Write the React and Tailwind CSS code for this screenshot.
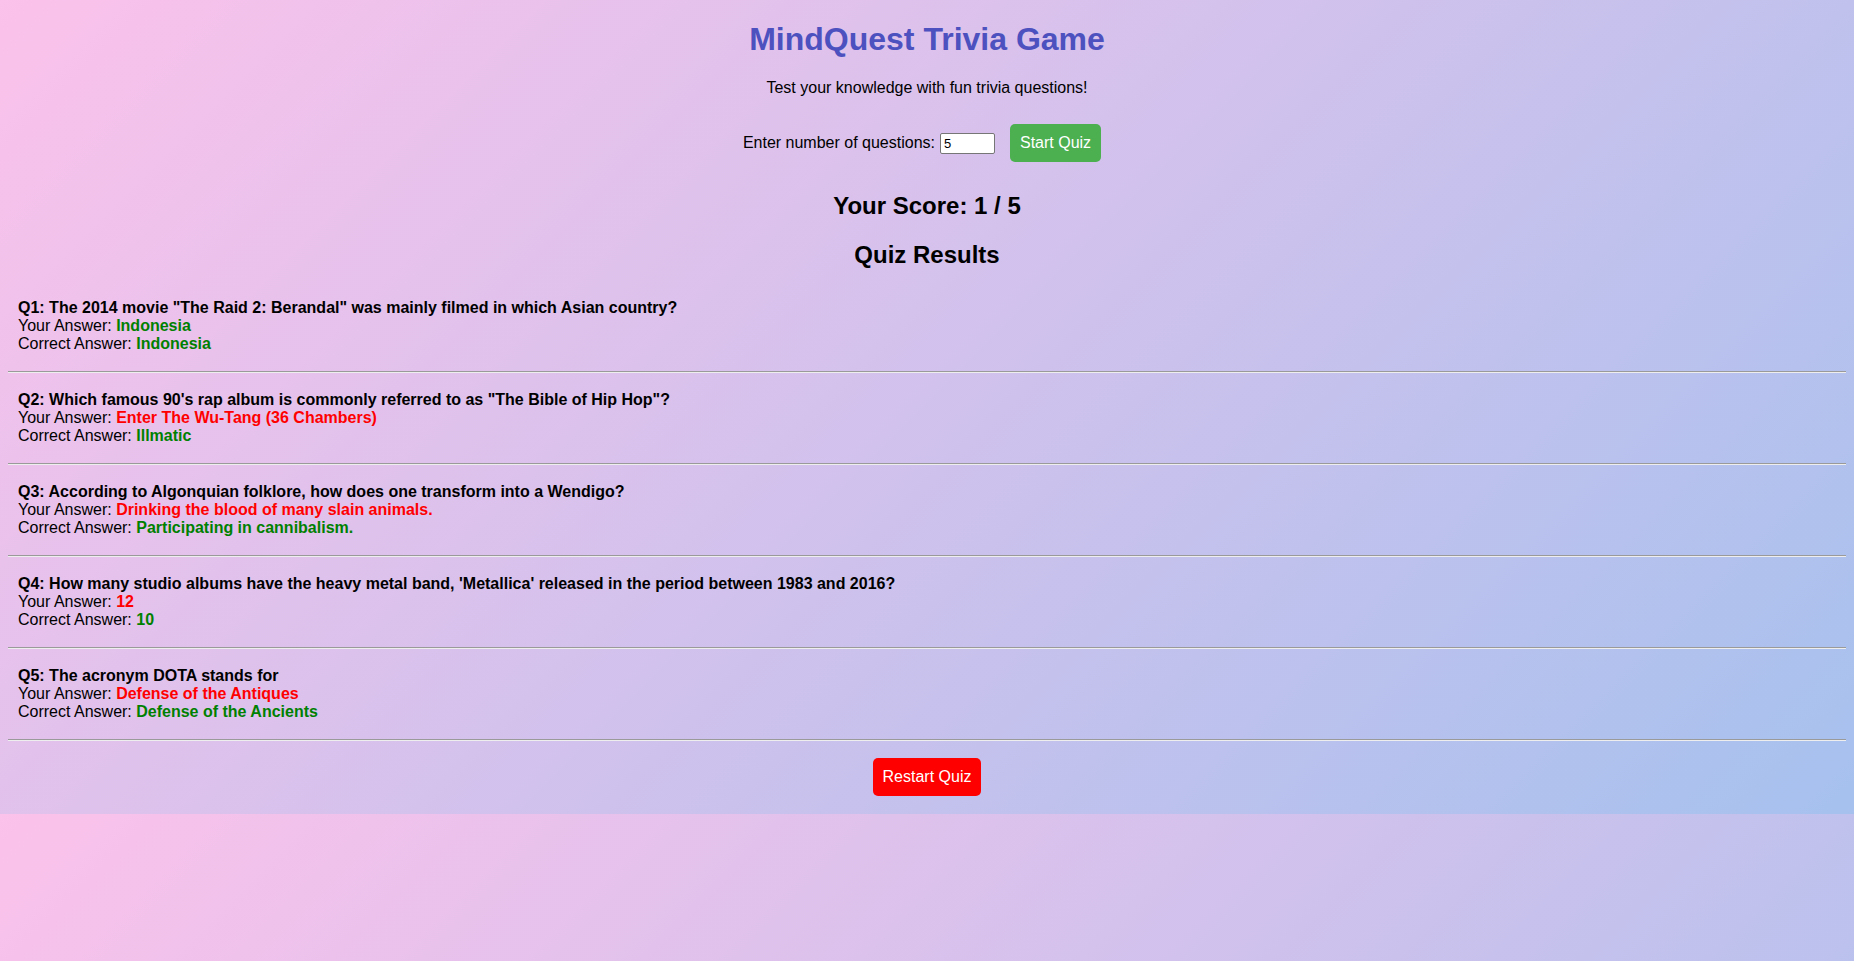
import React from "react";

const results = [
  {
    q: 'Q1: The 2014 movie "The Raid 2: Berandal" was mainly filmed in which Asian country?',
    yours: "Indonesia",
    correct: "Indonesia",
    ok: true,
  },
  {
    q: 'Q2: Which famous 90\'s rap album is commonly referred to as "The Bible of Hip Hop"?',
    yours: "Enter The Wu-Tang (36 Chambers)",
    correct: "Illmatic",
    ok: false,
  },
  {
    q: "Q3: According to Algonquian folklore, how does one transform into a Wendigo?",
    yours: "Drinking the blood of many slain animals.",
    correct: "Participating in cannibalism.",
    ok: false,
  },
  {
    q: "Q4: How many studio albums have the heavy metal band, 'Metallica' released in the period between 1983 and 2016?",
    yours: "12",
    correct: "10",
    ok: false,
  },
  {
    q: "Q5: The acronym DOTA stands for",
    yours: "Defense of the Antiques",
    correct: "Defense of the Ancients",
    ok: false,
  },
];

export default function App() {
  return (
    <div className="min-h-[961px] font-['Liberation_Sans',Arial,sans-serif] text-base text-black bg-[linear-gradient(135deg,#fbc2eb_0%,#a6c1ee_100%)] bg-[length:100%_814px] bg-repeat">
      <div className="px-2 pt-[21px] pb-2 text-center">
        <h1 className="text-[32px] leading-[37px] font-bold text-[#4c51bf]">
          MindQuest Trivia Game
        </h1>
        <p className="mt-[21px] leading-[18px]">
          Test your knowledge with fun trivia questions!
        </p>
        <div className="mt-[17px] h-[58px] flex items-center justify-center">
          <label className="leading-[18px]">Enter number of questions:</label>
          <input
            className="ml-[5px] w-[55px] h-[21px] bg-white border border-[#767676] rounded-[2px] px-[3px] text-[13px] text-black outline-none"
            value="5"
            readOnly
          />
          <button className="ml-[15px] mr-[10px] h-[38px] px-[10px] rounded-[5px] bg-[#4caf50] text-white leading-[18px]">
            Start Quiz
          </button>
        </div>
        <h2 className="mt-[20px] text-[24px] leading-[28px] font-bold">
          Your Score: 1 / 5
        </h2>
        <h2 className="mt-[21px] text-[24px] leading-[28px] font-bold">
          Quiz Results
        </h2>
        <div className="mt-[20px] text-left">
          {results.map((r, i) => (
            <div key={i}>
              <div className="p-[10px] leading-[18px]">
                <div className="font-bold">{r.q}</div>
                <div>
                  Your Answer:{" "}
                  <span className={r.ok ? "font-bold text-[#008000]" : "font-bold text-[#ff0000]"}>
                    {r.yours}
                  </span>
                </div>
                <div>
                  Correct Answer: <span className="font-bold text-[#008000]">{r.correct}</span>
                </div>
              </div>
              <hr className="my-2 border-0 border-t border-t-[#9a9a9a] border-b border-b-[#eeeeee]" />
            </div>
          ))}
        </div>
        <div className="mt-[17px] mb-[10px] flex justify-center">
          <button className="h-[38px] px-[10px] rounded-[5px] bg-[#ff0000] text-white leading-[18px]">
            Restart Quiz
          </button>
        </div>
      </div>
    </div>
  );
}
